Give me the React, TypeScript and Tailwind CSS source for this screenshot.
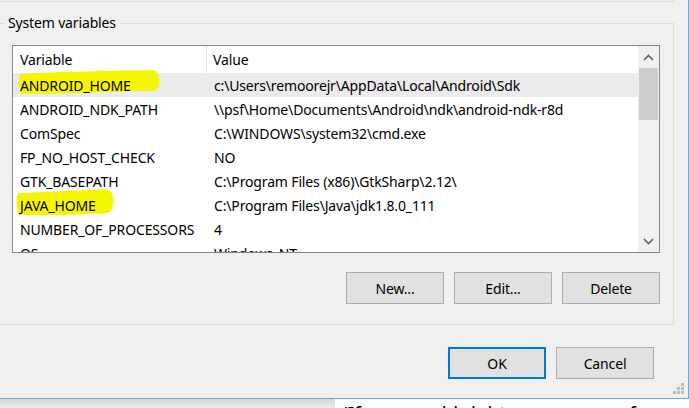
import React from 'react';

const rows: { name: string; value: string; mark?: 'android' | 'java' }[] = [
  { name: 'ANDROID_HOME', value: 'c:\\Users\\remoorejr\\AppData\\Local\\Android\\Sdk', mark: 'android' },
  { name: 'ANDROID_NDK_PATH', value: '\\\\psf\\Home\\Documents\\Android\\ndk\\android-ndk-r8d' },
  { name: 'ComSpec', value: 'C:\\WINDOWS\\system32\\cmd.exe' },
  { name: 'FP_NO_HOST_CHECK', value: 'NO' },
  { name: 'GTK_BASEPATH', value: 'C:\\Program Files (x86)\\GtkSharp\\2.12\\' },
  { name: 'JAVA_HOME', value: 'C:\\Program Files\\Java\\jdk1.8.0_111', mark: 'java' },
  { name: 'NUMBER_OF_PROCESSORS', value: '4' },
  { name: 'OS', value: 'Windows_NT' },
];

// hand-drawn highlighter strokes behind the variable names
function Highlight({ kind }: { kind: 'android' | 'java' }) {
  if (kind === 'android') {
    return (
      <svg className="absolute left-[5px] top-[-3px]" width="142" height="28" viewBox="0 0 142 28">
        <path d="M2 4 C30 2 80 1 134 0 C141 1 142 8 141 15 C140 22 136 21 120 21 C80 22 40 24 4 24 C1 20 0 10 2 4 Z" fill="#f5f500" />
      </svg>
    );
  }
  return (
    <svg className="absolute left-[2px] top-[-4px]" width="100" height="30" viewBox="0 0 102 30">
      <path d="M3 4 C30 3 60 1 92 0 C100 1 101 8 100 16 C99 24 94 25 84 25 C60 26 30 27 4 26 C1 20 1 10 3 4 Z" fill="#f5f500" />
    </svg>
  );
}

function Btn({ label, primary }: { label: string; primary?: boolean }) {
  return (
    <div
      className={
        primary
          ? 'w-[98px] h-[32px] flex items-center justify-center bg-[#e1e1e1] border-2 border-[#0078d7] text-[14px] tracking-[-0.15px] text-black'
          : 'w-[98px] h-[32px] flex items-center justify-center bg-[#e1e1e1] border border-[#adadad] text-[14px] tracking-[-0.15px] text-black'
      }
    >
      {label}
    </div>
  );
}

function Chevron({ up }: { up?: boolean }) {
  return (
    <svg width="11" height="7" viewBox="0 0 11 7">
      <path d={up ? 'M1 6 L5.5 1.5 L10 6' : 'M1 1 L5.5 5.5 L10 1'} fill="none" stroke="#606060" strokeWidth="1.6" />
    </svg>
  );
}

export default function App() {
  return (
    <div
      className="w-[689px] h-[408px] overflow-hidden bg-[#e4e4e4] flex flex-col"
      style={{ fontFamily: '"Noto Sans", "Open Sans", sans-serif' }}
    >
      {/* dialog window */}
      <div className="h-[399px] shrink-0 w-[689px] bg-[#f0f0f0] border-b border-r border-[#5cb3f0] flex flex-col relative">
        {/* end of the user variables group */}
        <div className="h-[2px] w-[674px] border-b border-r border-[#dcdcdc]" />

        {/* System variables group */}
        <div className="relative -ml-px mt-[21px] w-[675px] h-[302px] border border-[#dcdcdc] pl-[12px] pt-[21px]">
          <span className="absolute left-[4px] top-[-12px] px-[4px] bg-[#f0f0f0] text-[14px] tracking-[-0.15px] leading-[22px] text-black">
            System variables
          </span>

          {/* list view */}
          <div className="w-[648px] h-[208px] border border-[#828790] bg-white flex overflow-hidden">
            <div className="flex-1 flex flex-col overflow-hidden">
              <div className="h-[27px] shrink-0 flex text-[14px] tracking-[-0.15px] text-black">
                <div className="w-[194px] pl-[7px] flex items-center border-r border-[#e5e5e5]">Variable</div>
                <div className="flex-1 pl-[6px] flex items-center">Value</div>
              </div>
              {rows.map((r, i) => (
                <div
                  key={r.name}
                  className={
                    i === 0
                      ? 'h-[24px] shrink-0 flex text-[14px] tracking-[-0.15px] text-black bg-[#ebebeb]'
                      : 'h-[24px] shrink-0 flex text-[14px] tracking-[-0.15px] text-black'
                  }
                >
                  <div className="w-[194px] pl-[7px] flex items-center relative">
                    {r.mark && <Highlight kind={r.mark} />}
                    <span className="relative whitespace-nowrap">{r.name}</span>
                  </div>
                  <div className="flex-1 pl-[7px] flex items-center whitespace-nowrap">{r.value}</div>
                </div>
              ))}
            </div>

            {/* vertical scrollbar */}
            <div className="w-[21px] bg-[#f0f0f0] flex flex-col items-center">
              <div className="h-[22px] w-full flex items-center justify-center">
                <Chevron up />
              </div>
              <div className="w-[19px] h-[52px] bg-[#cdcdcd]" />
              <div className="flex-1" />
              <div className="h-[22px] w-full flex items-center justify-center">
                <Chevron />
              </div>
            </div>
          </div>

          <div className="w-[648px] mt-[19px] flex justify-end gap-[10px]">
            <Btn label="New..." />
            <Btn label="Edit..." />
            <Btn label="Delete" />
          </div>
        </div>

        <div className="w-[654px] mt-[22px] flex justify-end gap-[10px]">
          <Btn label="OK" primary />
          <Btn label="Cancel" />
        </div>

        {/* size grip */}
        <svg className="absolute right-[3px] bottom-[3px]" width="12" height="12" viewBox="0 0 12 12">
          <rect x="8" y="0" width="3" height="3" fill="#bcbcbc" />
          <rect x="4" y="4" width="3" height="3" fill="#bcbcbc" />
          <rect x="8" y="4" width="3" height="3" fill="#bcbcbc" />
          <rect x="0" y="8" width="3" height="3" fill="#bcbcbc" />
          <rect x="4" y="8" width="3" height="3" fill="#bcbcbc" />
          <rect x="8" y="8" width="3" height="3" fill="#bcbcbc" />
        </svg>
      </div>

      {/* page behind the dialog */}
      <div className="flex-1 min-h-0 flex">
        <div className="w-[335px] bg-gradient-to-b from-[#d4d4d4] to-[#ececec]" />
        <div className="flex-1 bg-white pl-[7px] overflow-hidden">
          <div className="text-[19px] leading-[22px] text-black whitespace-nowrap mt-[4px]">
            (If you would right now use one for some both
          </div>
        </div>
      </div>
    </div>
  );
}
